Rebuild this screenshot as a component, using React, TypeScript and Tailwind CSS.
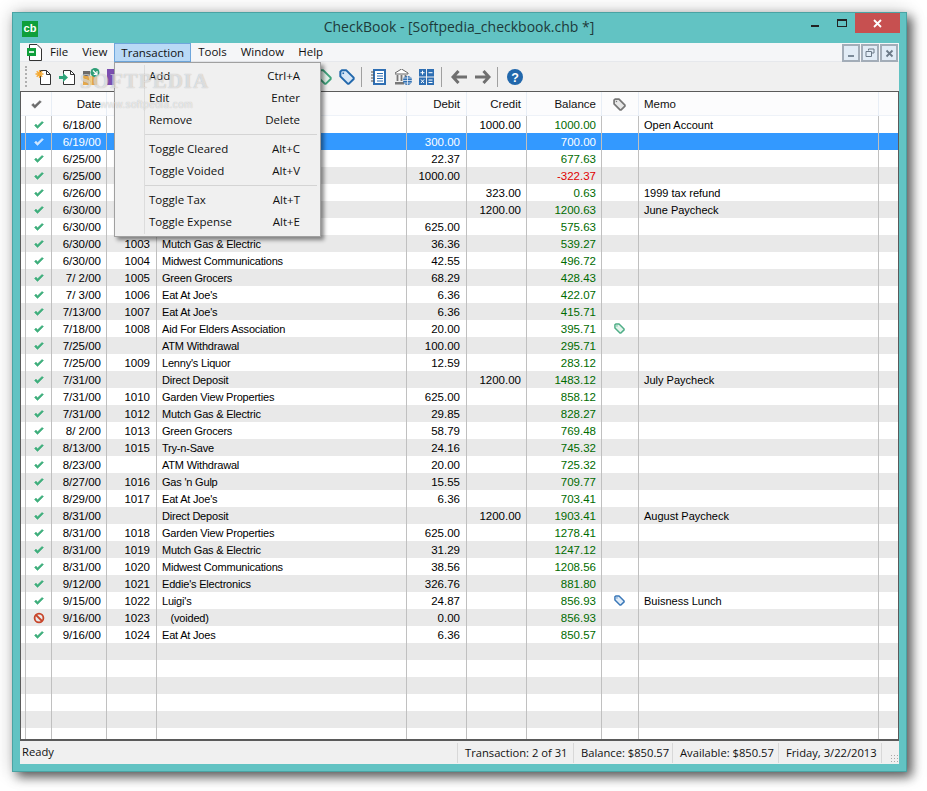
import React from "react";

type Row = { c?: "ok" | "void"; d?: string; n?: string; p?: string; db?: string; cr?: string; b?: string; neg?: boolean; tag?: "green" | "blue"; m?: string };

const rows: Row[] = [
  { c: "ok", d: "6/18/00", cr: "1000.00", b: "1000.00", m: "Open Account" },
  { c: "ok", d: "6/19/00", db: "300.00", b: "700.00" },
  { c: "ok", d: "6/25/00", db: "22.37", b: "677.63" },
  { c: "ok", d: "6/25/00", db: "1000.00", b: "-322.37", neg: true },
  { c: "ok", d: "6/26/00", cr: "323.00", b: "0.63", m: "1999 tax refund" },
  { c: "ok", d: "6/30/00", cr: "1200.00", b: "1200.63", m: "June Paycheck" },
  { c: "ok", d: "6/30/00", db: "625.00", b: "575.63" },
  { c: "ok", d: "6/30/00", n: "1003", p: "Mutch Gas & Electric", db: "36.36", b: "539.27" },
  { c: "ok", d: "6/30/00", n: "1004", p: "Midwest Communications", db: "42.55", b: "496.72" },
  { c: "ok", d: "7/ 2/00", n: "1005", p: "Green Grocers", db: "68.29", b: "428.43" },
  { c: "ok", d: "7/ 3/00", n: "1006", p: "Eat At Joe's", db: "6.36", b: "422.07" },
  { c: "ok", d: "7/13/00", n: "1007", p: "Eat At Joe's", db: "6.36", b: "415.71" },
  { c: "ok", d: "7/18/00", n: "1008", p: "Aid For Elders Association", db: "20.00", b: "395.71", tag: "green" },
  { c: "ok", d: "7/25/00", p: "ATM Withdrawal", db: "100.00", b: "295.71" },
  { c: "ok", d: "7/25/00", n: "1009", p: "Lenny's Liquor", db: "12.59", b: "283.12" },
  { c: "ok", d: "7/31/00", p: "Direct Deposit", cr: "1200.00", b: "1483.12", m: "July Paycheck" },
  { c: "ok", d: "7/31/00", n: "1010", p: "Garden View Properties", db: "625.00", b: "858.12" },
  { c: "ok", d: "7/31/00", n: "1012", p: "Mutch Gas & Electric", db: "29.85", b: "828.27" },
  { c: "ok", d: "8/ 2/00", n: "1013", p: "Green Grocers", db: "58.79", b: "769.48" },
  { c: "ok", d: "8/13/00", n: "1015", p: "Try-n-Save", db: "24.16", b: "745.32" },
  { c: "ok", d: "8/23/00", p: "ATM Withdrawal", db: "20.00", b: "725.32" },
  { c: "ok", d: "8/27/00", n: "1016", p: "Gas 'n Gulp", db: "15.55", b: "709.77" },
  { c: "ok", d: "8/29/00", n: "1017", p: "Eat At Joe's", db: "6.36", b: "703.41" },
  { c: "ok", d: "8/31/00", p: "Direct Deposit", cr: "1200.00", b: "1903.41", m: "August Paycheck" },
  { c: "ok", d: "8/31/00", n: "1018", p: "Garden View Properties", db: "625.00", b: "1278.41" },
  { c: "ok", d: "8/31/00", n: "1019", p: "Mutch Gas & Electric", db: "31.29", b: "1247.12" },
  { c: "ok", d: "8/31/00", n: "1020", p: "Midwest Communications", db: "38.56", b: "1208.56" },
  { c: "ok", d: "9/12/00", n: "1021", p: "Eddie's Electronics", db: "326.76", b: "881.80" },
  { c: "ok", d: "9/15/00", n: "1022", p: "Luigi's", db: "24.87", b: "856.93", tag: "blue", m: "Buisness Lunch" },
  { c: "void", d: "9/16/00", n: "1023", p: "   (voided)", db: "0.00", b: "856.93" },
  { c: "ok", d: "9/16/00", n: "1024", p: "Eat At Joes", db: "6.36", b: "850.57" },
  {}, {}, {}, {}, {}, {},
];

const Check = ({ color = "#3fae7c", s = 12 }: { color?: string; s?: number }) => (
  <svg width={s} height={s} viewBox="0 0 12 12"><path d="M1.5 6.5 L4.5 9.5 L10.5 3.5 L9 2.5 L4.5 6.8 L3 5 Z" fill={color} stroke={color} strokeWidth="0.5" /></svg>
);
const VoidIcon = () => (
  <svg width="12" height="12" viewBox="0 0 12 12"><circle cx="6" cy="6" r="4.4" fill="none" stroke="#c8452a" strokeWidth="1.8" /><path d="M3 3 L9 9" stroke="#c8452a" strokeWidth="1.8" /></svg>
);
const Tag = ({ color, s = 12, fill = "#fff", sw = 1.6 }: { color: string; s?: number; fill?: string; sw?: number }) => (
  <svg width={s} height={s} viewBox="0 0 12 12"><path d="M1 2 L2 1 L5.5 1 L11 6.5 L11 7.5 L7.5 11 L6.5 11 L1 5.5 Z" fill={fill} stroke={color} strokeWidth={sw} strokeLinejoin="round" /><rect x="2.6" y="2.6" width="1.2" height="1.2" fill={color} /></svg>
);

const cols = "grid grid-cols-[5px_26px_55px_50px_250px_60px_60px_75px_37px_240px_1fr]";
const cell = "border-r border-[#c0c0c0] h-[17px] leading-[19px] whitespace-pre overflow-hidden";

function GridRow({ r, i }: { r: Row; i: number }) {
  const sel = i === 1;
  const bg = sel ? "bg-[#3399ff] text-white" : i % 2 === 1 ? "bg-[#e9e9e9] text-black" : "bg-white text-black";
  const bal = sel ? "text-white" : r.neg ? "text-[#e00000]" : "text-[#006b00]";
  return (
    <div className={`${cols} ${bg} h-[17px]`}>
      <div className={cell} />
      <div className={`${cell} flex items-center justify-center`}>
        {r.c === "ok" && <Check color={sel ? "#cfe6ff" : "#3fae7c"} />}
        {r.c === "void" && <VoidIcon />}
      </div>
      <div className={`${cell} text-right pr-[5px]`}>{r.d}</div>
      <div className={`${cell} text-right pr-[6px]`}>{r.n}</div>
      <div className={`${cell} pl-[5px] text-[11px] tracking-[-0.2px]`}>{r.p}</div>
      <div className={`${cell} text-right pr-[6px]`}>{r.db}</div>
      <div className={`${cell} text-right pr-[5px]`}>{r.cr}</div>
      <div className={`${cell} text-right pr-[5px] ${bal}`}>{r.b}</div>
      <div className={`${cell} flex items-center justify-center pr-[2px]`}>
        {r.tag && <Tag color={r.tag === "green" ? "#4fae87" : "#3a78b8"} fill={r.tag === "green" ? "#e4f4ec" : "#e0ecf8"} s={11} />}
      </div>
      <div className={`${cell} pl-[5px] text-[11px]`}>{r.m}</div>
      <div />
    </div>
  );
}

const Sep = ({ ml }: { ml: string }) => <div className={`w-px h-[20px] bg-[#a0a0a0] ${ml}`} />;

const NewDoc = () => (
  <svg width="16" height="16" viewBox="0 0 16 16"><path d="M5.5 1.5 H11.5 L15.5 5.5 V15.5 H5.5 Z" fill="#fff" stroke="#333" /><path d="M11.5 1.5 V5.5 H15.5" fill="none" stroke="#333" /><path d="M4.5 1 V9 M0.5 5 H8.5 M1.7 2.2 L7.3 7.8 M7.3 2.2 L1.7 7.8" stroke="#f4a933" strokeWidth="1.3" /></svg>
);
const OpenDoc = () => (
  <svg width="16" height="16" viewBox="0 0 16 16"><path d="M4.5 1.5 H11.5 L15.5 5.5 V15.5 H4.5 Z" fill="#fff" stroke="#333" /><path d="M11.5 1.5 V5.5 H15.5" fill="none" stroke="#333" /><path d="M0 7 H4 V4 L9 8.5 L4 13 V10 H0 Z" fill="#2fa57b" /></svg>
);
const Folder = () => (
  <svg width="17" height="17" viewBox="0 0 17 17"><rect x="0" y="3" width="7" height="6" fill="#6b6b6b" /><path d="M0 8 H14 V17 H0 Z" fill="#e6a94a" /><rect x="6" y="8" width="3" height="9" fill="#f2cf86" /><circle cx="12" cy="4.5" r="4.5" fill="#2f9e77" /><path d="M10 2.5 L13.5 6 M14 3 V6.3 H10.7" stroke="#fff" strokeWidth="1.2" fill="none" /></svg>
);
const Ledger = () => (
  <svg width="15" height="16" viewBox="0 0 15 16"><path d="M2 0 H15 V16 H2 Z" fill="#2f6fb3" /><rect x="4" y="2" width="9" height="12" fill="#fff" /><path d="M6 4.5 H12 M6 7 H12 M6 9.5 H12 M6 12 H12" stroke="#2f6fb3" /><path d="M0 3 H3 M0 6 H3 M0 9 H3 M0 12 H3" stroke="#555" /></svg>
);
const Bank = () => (
  <svg width="17" height="16" viewBox="0 0 17 16"><path d="M0 4 L6.5 0 L13 4 V5 H0 Z" fill="#fff" stroke="#666" /><path d="M2.5 6 V12 M6.5 6 V12 M10.5 6 V9" stroke="#777" strokeWidth="1.8" /><rect x="0" y="13" width="9" height="2.5" fill="#777" /><circle cx="12.5" cy="11.5" r="4.5" fill="#2f6fb3" /><path d="M8 11.5 H17 M12.5 7 V16 M9 9 H16 M9 14 H16" stroke="#fff" strokeWidth="0.7" /></svg>
);
const Calc = () => (
  <svg width="15" height="16" viewBox="0 0 15 16"><rect x="0" y="0" width="7" height="7.5" fill="#2f6fb3" /><rect x="8" y="0" width="7" height="7.5" fill="#2f6fb3" /><rect x="0" y="8.5" width="7" height="7.5" fill="#2f6fb3" /><rect x="8" y="8.5" width="7" height="7.5" fill="#2f6fb3" /><path d="M1.5 3.7 H5.5 M3.5 1.7 V5.7 M9.5 3.7 H13.5 M2 10.5 L5 14 M5 10.5 L2 14 M9.5 11 H13.5 M9.5 13.5 H13.5" stroke="#fff" /></svg>
);
const Arrow = ({ flip }: { flip?: boolean }) => (
  <svg width="16" height="14" viewBox="0 0 16 14" className={flip ? "-scale-x-100" : ""}><path d="M7.5 1 L2 7 L7.5 13 M2 7 H16" fill="none" stroke="#6f6f6f" strokeWidth="3" /></svg>
);
const Help = () => (
  <svg width="16" height="16" viewBox="0 0 16 16"><circle cx="8" cy="8" r="8" fill="#2268ac" /><text x="8" y="12.5" textAnchor="middle" fontSize="12.5" fontWeight="700" fill="#fff" fontFamily="'Liberation Sans', sans-serif">?</text></svg>
);

const MenuItem = ({ l, k }: { l: string; k: string }) => (
  <div className="flex justify-between h-[22px] leading-[22px] pl-[34px] pr-[20px]"><span>{l}</span><span>{k}</span></div>
);
const MenuSep = () => <div className="ml-[30px] mr-[3px] h-px bg-[#d4d4d4] my-[3px]" />;
const MdiBtn = ({ children }: { children: React.ReactNode }) => (
  <div className="w-[18px] h-[18px] border-2 border-[#a3adb8] bg-[#e2ecf6] flex items-center justify-center">{children}</div>
);

export default function App() {
  return (
    <div className="w-[927px] h-[791px] bg-white pt-[12px] pl-[12px] overflow-hidden font-['Liberation_Sans',sans-serif] text-[11.5px] text-black">
      <div className="w-[895px] h-[760px] bg-[#62c3c3] border border-[#4aa3a3] shadow-[5px_5px_10px_rgba(0,0,0,0.6),0_0_18px_rgba(0,0,0,0.2)] flex flex-col">
        {/* title bar */}
        <div className="h-[30px] flex items-center relative shrink-0">
          <div className="ml-[9px] mt-[1px] w-[16px] h-[16px] bg-[#0f9f3a] text-white text-[11px] font-bold leading-[15px] text-center">cb</div>
          <div className="flex-1 text-center text-[14px] text-[#1d3a3a] pl-[79px] pb-[3px] font-['Open_Sans',sans-serif]">CheckBook - [Softpedia_checkbook.chb *]</div>
          <div className="flex items-start self-start mr-[6px]">
            <div className="w-[28px] h-[20px] flex items-center justify-center"><div className="w-[8px] h-[2px] bg-[#222] mt-[6px]" /></div>
            <div className="w-[26px] h-[20px] flex items-center justify-center"><div className="w-[10px] h-[8px] border border-[#222] border-t-2" /></div>
            <div className="w-[45px] h-[20px] bg-[#c75050] flex items-center justify-center">
              <svg width="9" height="9" viewBox="0 0 9 9"><path d="M1 1 L8 8 M8 1 L1 8" stroke="#fff" strokeWidth="1.8" /></svg>
            </div>
          </div>
        </div>
        {/* client */}
        <div className="mx-[7px] flex-1 flex flex-col bg-[#f0f0f0] relative min-h-0">
          {/* menu bar */}
          <div className="h-[19px] bg-[#f5f6f8] border-b border-[#e6e8ec] flex items-center relative shrink-0 font-['Open_Sans',sans-serif] text-[11.5px] text-[#111]">
            <svg className="ml-[7px]" width="15" height="17" viewBox="0 0 15 17"><path d="M2.5 0.5 H10 L14.5 5 V16.5 H2.5 Z" fill="#fff" stroke="#333" /><rect x="0" y="4" width="9" height="8" fill="#0f9f3a" /><rect x="2" y="7" width="5" height="2" fill="#cfeeda" /></svg>
            <span className="ml-[8px]">File</span>
            <span className="ml-[14px]">View</span>
            <span className="ml-[7px] h-[19px] px-[6px] leading-[18px] bg-[#b9d9f6] border border-[#6ea6dc]">Transaction</span>
            <span className="ml-[7px]">Tools</span>
            <span className="ml-[14px]">Window</span>
            <span className="ml-[14px]">Help</span>
            <div className="ml-auto flex gap-[1px] mr-[1px] mt-[1px] self-start">
              <MdiBtn><div className="w-[6px] h-[2px] bg-[#7b8a99] mt-[6px]" /></MdiBtn>
              <MdiBtn><svg width="10" height="10" viewBox="0 0 10 10"><path d="M3.5 2.5 V1 H9 V5 H7 M1 3.5 H6.5 V8.5 H1 Z" fill="none" stroke="#6c7a88" /></svg></MdiBtn>
              <MdiBtn><svg width="9" height="9" viewBox="0 0 9 9"><path d="M1.5 1.5 L7.5 7.5 M7.5 1.5 L1.5 7.5" stroke="#6c7a88" strokeWidth="1.8" /></svg></MdiBtn>
            </div>
          </div>
          {/* toolbar */}
          <div className="h-[29px] flex items-center shrink-0 pl-[5px] bg-[#f0f0f0]">
            <div className="w-[2px] h-[21px] border-l-2 border-dotted border-[#b0b0b0] mr-[8px]" />
            <NewDoc />
            <div className="ml-[8px]"><OpenDoc /></div>
            <div className="ml-[8px]"><Folder /></div>
            <div className="ml-[7px] w-[16px] h-[16px] bg-[#7b4fb0]" />
            <div className="ml-[193px]"><Tag color="#3fa37c" s={16} fill="#e4f4ec" sw={1.5} /></div>
            <div className="ml-[7px]"><Tag color="#2268ac" s={16} fill="#d6e6f6" sw={1.5} /></div>
            <Sep ml="ml-[6px]" />
            <div className="ml-[9px]"><Ledger /></div>
            <div className="ml-[9px]"><Bank /></div>
            <div className="ml-[7px]"><Calc /></div>
            <Sep ml="ml-[7px]" />
            <div className="ml-[9px]"><Arrow /></div>
            <div className="ml-[8px]"><Arrow flip /></div>
            <Sep ml="ml-[6px]" />
            <div className="ml-[9px]"><Help /></div>
          </div>
          {/* grid */}
          <div className="flex-1 min-h-0 border-t border-l border-r border-[#5a5a5a] bg-white overflow-hidden">
            <div className={`${cols} h-[24px] bg-[#fcfcfd] border-b border-[#eef2f8] leading-[24px] text-[#111]`}>
              <div className="col-span-2 border-r border-[#e8eef6] flex items-center justify-center"><Check color="#6b6b6b" s={13} /></div>
              <div className="border-r border-[#e8eef6] text-right pr-[5px]">Date</div>
              <div className="border-r border-[#e8eef6]" />
              <div className="border-r border-[#e8eef6]" />
              <div className="border-r border-[#e8eef6] text-right pr-[6px]">Debit</div>
              <div className="border-r border-[#e8eef6] text-right pr-[5px]">Credit</div>
              <div className="border-r border-[#e8eef6] text-right pr-[5px]">Balance</div>
              <div className="border-r border-[#e8eef6] flex items-center justify-center pr-[2px]"><Tag color="#777" fill="#e8e8e8" s={13} /></div>
              <div className="border-r border-[#e8eef6] pl-[5px]">Memo</div>
              <div />
            </div>
            {rows.map((r, i) => <GridRow key={i} r={r} i={i} />)}
          </div>
          {/* status bar */}
          <div className="h-[25px] shrink-0 border-t-2 border-[#5a5a5a] bg-[#f0f0f0] flex items-center text-[#111] font-['Open_Sans',sans-serif] text-[11.2px] whitespace-nowrap">
            <div className="flex-1 pl-[2px]">Ready</div>
            <div className="border-l border-[#d8d8d8] h-[20px] leading-[20px] pl-[7px] w-[116px]">Transaction: 2 of 31</div>
            <div className="border-l border-[#d8d8d8] h-[20px] leading-[20px] pl-[7px] w-[99px]">Balance: $850.57</div>
            <div className="border-l border-[#d8d8d8] h-[20px] leading-[20px] pl-[7px] w-[106px]">Available: $850.57</div>
            <div className="border-l border-r border-[#d8d8d8] h-[20px] leading-[20px] pl-[7px] w-[104px]">Friday, 3/22/2013</div>
            <div className="w-[17px] h-[20px] relative"><div className="absolute right-[1px] bottom-[1px] w-[8px] h-[8px] bg-[radial-gradient(#a8a8a8_1px,transparent_1px)] bg-[length:3px_3px]" /></div>
          </div>
          {/* dropdown */}
          <div className="absolute left-[94px] top-[19px] w-[207px] h-[175px] bg-[#f0f0f0] border border-[#a0a0a0] shadow-[3px_3px_4px_rgba(0,0,0,0.45)] pt-[2px] font-['Open_Sans',sans-serif] text-[11.5px] text-[#111] z-10">
            <div className="absolute left-[29px] top-[2px] bottom-[2px] w-px bg-[#dcdcdc]" />
            <MenuItem l="Add" k="Ctrl+A" />
            <MenuItem l="Edit" k="Enter" />
            <MenuItem l="Remove" k="Delete" />
            <MenuSep />
            <MenuItem l="Toggle Cleared" k="Alt+C" />
            <MenuItem l="Toggle Voided" k="Alt+V" />
            <MenuSep />
            <MenuItem l="Toggle Tax" k="Alt+T" />
            <MenuItem l="Toggle Expense" k="Alt+E" />
          </div>
          {/* watermark */}
          <div className="absolute left-[60px] top-[26px] z-20 pointer-events-none font-['Liberation_Serif',serif] font-bold text-[21px] leading-[24px] tracking-[1px] text-white/60 [text-shadow:0_0_1px_rgba(0,0,0,0.3)] whitespace-nowrap">SOFTPEDIA</div>
          <div className="absolute left-[80px] top-[56px] z-20 pointer-events-none text-[10px] leading-[12px] tracking-[0.4px] text-white/70 [text-shadow:0_0_1px_rgba(0,0,0,0.3)] whitespace-nowrap">www.softpedia.com</div>
        </div>
        <div className="h-[7px] shrink-0" />
      </div>
    </div>
  );
}
